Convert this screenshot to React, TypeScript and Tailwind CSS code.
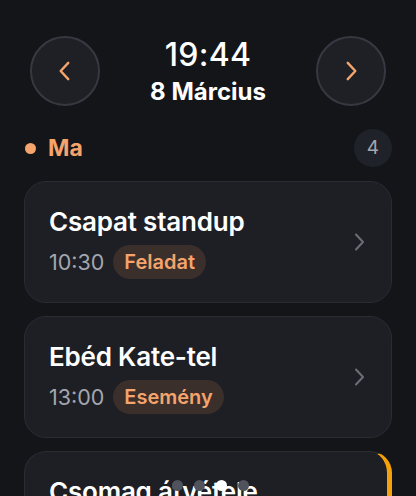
import React from "react";

const Chevron = ({ dir, className, sw = 2.2 }: { dir: "left" | "right"; className?: string; sw?: number }) => (
  <svg viewBox="0 0 24 24" className={className} fill="none" stroke="currentColor" strokeWidth={sw} strokeLinecap="round" strokeLinejoin="round">
    {dir === "left" ? <path d="M15 4.5l-7 7.5 7 7.5" /> : <path d="M9 4.5l7 7.5-7 7.5" />}
  </svg>
);

const Card = ({ title, time, tag, accent }: { title: string; time: string; tag: string; accent?: boolean }) => (
  <div className={`relative flex items-center justify-between rounded-[22px] border border-[#2a2c33] bg-[#1d1f25] h-[122px] pl-6 pr-[20px] shrink-0 ${accent ? "border-r-[5px] border-r-[#f5a10a]" : ""}`}>
    <div className="flex flex-col gap-[7px]">
      <div className="text-[26px] font-semibold text-white leading-8 tracking-[-0.2px] whitespace-nowrap">{title}</div>
      <div className="flex items-center gap-[9px]">
        <span className="text-[21.5px] text-[#a3a6ae] leading-6">{time}</span>
        <span className="rounded-full bg-[#3a2f2b] px-[11px] h-[34px] flex items-center text-[20px] font-semibold text-[#f4a46c]">{tag}</span>
      </div>
    </div>
    <Chevron dir="right" className="w-[24px] h-[24px] text-[#6b6e77]" sw={2} />
  </div>
);

export default function App() {
  return (
    <div className="w-[416px] h-[496px] overflow-hidden bg-[#141519] relative" style={{ fontFamily: "Inter, 'Noto Sans', sans-serif" }}>
      <div className="px-6 pt-9">
        <div className="flex items-center justify-between px-[6px] h-[70px]">
          <button className="w-[70px] h-[70px] rounded-full border-2 border-[#363941] bg-[#1e2026] flex items-center justify-center">
            <Chevron dir="left" className="w-[26px] h-[26px] text-[#f4a46c]" />
          </button>
          <div className="flex flex-col items-center mt-[1px]">
            <div className="text-[32px] font-medium text-white leading-9 tracking-[0.3px]">19:44</div>
            <div className="text-[24px] font-bold text-white leading-7 mt-[5px]">8 Március</div>
          </div>
          <button className="w-[70px] h-[70px] rounded-full border-2 border-[#363941] bg-[#1e2026] flex items-center justify-center">
            <Chevron dir="right" className="w-[26px] h-[26px] text-[#f4a46c]" />
          </button>
        </div>
        <div className="flex items-center justify-between mt-[23px] mb-[14px]">
          <div className="flex items-center gap-3">
            <span className="w-[11px] h-[11px] rounded-full bg-[#f4a46c] ml-[1px]" />
            <span className="text-[23px] font-bold text-[#f4a46c] leading-7">Ma</span>
          </div>
          <div className="w-[38px] h-[38px] rounded-full bg-[#20222a] flex items-center justify-center text-[19px] text-[#a3a6ae]">4</div>
        </div>
        <div className="flex flex-col gap-[13px]">
          <Card title="Csapat standup" time="10:30" tag="Feladat" />
          <Card title="Ebéd Kate-tel" time="13:00" tag="Esemény" />
          <Card title="Csomag átvétele" time="16:00" tag="Feladat" accent />
        </div>
      </div>
      <div className="absolute left-0 right-0 top-[480px] flex justify-center gap-[11px] ml-[4px]">
        <span className="w-[11px] h-[11px] rounded-full bg-[#50535b]" />
        <span className="w-[11px] h-[11px] rounded-full bg-[#50535b]" />
        <span className="w-[11px] h-[11px] rounded-full bg-white" />
        <span className="w-[11px] h-[11px] rounded-full bg-[#50535b]" />
      </div>
    </div>
  );
}
